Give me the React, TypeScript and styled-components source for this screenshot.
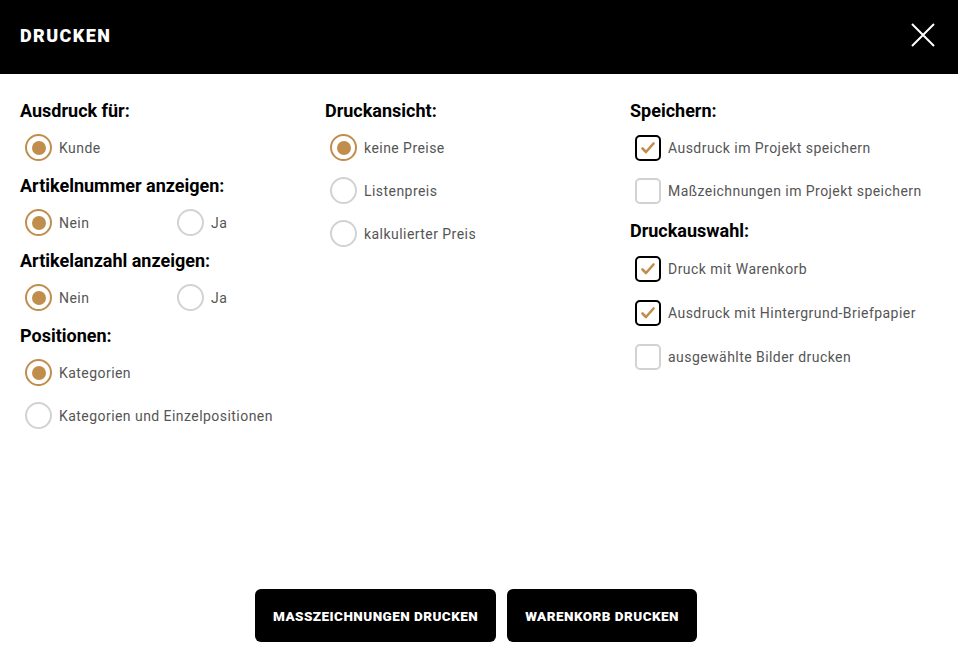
import * as React from "react";
import styled, { createGlobalStyle } from "styled-components";

const ACCENT = "#c18d4c";

const GlobalStyle = createGlobalStyle`
  html, body {
    margin: 0;
    padding: 0;
    background: #fff;
  }
  body {
    font-family: Roboto, "Liberation Sans", sans-serif;
    color: #000;
  }
`;

const Dialog = styled.div`
  width: 958px;
  height: 667px;
  display: flex;
  flex-direction: column;
  background: #fff;
`;

const Header = styled.div`
  height: 74px;
  background: #000;
  display: flex;
  align-items: center;
  justify-content: space-between;
  padding: 0 23px 4px 20px;
  box-sizing: border-box;
  flex-shrink: 0;
`;

const Title = styled.h1`
  margin: 0;
  color: #fff;
  font-size: 18px;
  font-weight: 900;
  letter-spacing: 1.4px;
`;

const CloseButton = styled.button`
  width: 24px;
  height: 24px;
  padding: 0;
  border: 0;
  background: none;
  cursor: pointer;
  display: flex;
`;

const Body = styled.div`
  flex: 1;
  display: grid;
  grid-template-columns: 305px 305px 1fr;
  padding: 26px 20px 0;
  align-content: start;
`;

const Column = styled.div`
  display: flex;
  flex-direction: column;
`;

const GroupTitle = styled.h2`
  margin: 0;
  height: 22px;
  line-height: 22px;
  font-size: 18px;
  font-weight: 700;
`;

const Options = styled.div<{
  $inline?: boolean;
  $before?: number;
  $after?: number;
  $row?: number;
}>`
  display: flex;
  flex-direction: ${(p) => (p.$inline ? "row" : "column")};
  padding: ${(p) => p.$before ?? 4}px 0 ${(p) => p.$after ?? 6}px 5px;
  & > label {
    height: ${(p) => p.$row ?? 43}px;
  }
`;

const OptionRow = styled.label<{ $width?: number }>`
  display: flex;
  align-items: center;
  gap: 7px;
  ${(p) => (p.$width ? `width: ${p.$width}px;` : "")}
  font-size: 14px;
  color: #555;
  letter-spacing: 0.45px;
  cursor: pointer;
`;

const RadioMark = styled.span<{ $on?: boolean }>`
  width: 27px;
  height: 27px;
  box-sizing: border-box;
  border-radius: 50%;
  border: 2px solid ${(p) => (p.$on ? ACCENT : "#d2d2d2")};
  display: flex;
  align-items: center;
  justify-content: center;
  flex-shrink: 0;
  &::after {
    content: "";
    width: 14px;
    height: 14px;
    border-radius: 50%;
    background: ${(p) => (p.$on ? ACCENT : "transparent")};
  }
`;

const CheckMark = styled.span<{ $on?: boolean }>`
  width: 26px;
  height: 26px;
  box-sizing: border-box;
  border-radius: 5px;
  border: 2px solid ${(p) => (p.$on ? "#000" : "#d2d2d2")};
  display: flex;
  align-items: center;
  justify-content: center;
  flex-shrink: 0;
`;

const Footer = styled.div`
  display: flex;
  justify-content: center;
  gap: 11px;
  padding: 0 6px 25px 0;
`;

const ActionButton = styled.button`
  height: 53px;
  padding: 0 18px;
  border: 0;
  border-radius: 6px;
  background: #000;
  color: #fff;
  font-family: Roboto, "Liberation Sans", sans-serif;
  font-size: 13.5px;
  font-weight: 900;
  letter-spacing: 0.45px;
  cursor: pointer;
`;

const Radio: React.FC<{ label: string; on?: boolean; width?: number }> = ({
  label,
  on,
  width,
}) => (
  <OptionRow $width={width}>
    <RadioMark $on={on} />
    {label}
  </OptionRow>
);

const Check: React.FC<{ label: string; on?: boolean }> = ({ label, on }) => (
  <OptionRow>
    <CheckMark $on={on}>
      {on && (
        <svg width="16" height="16" viewBox="0 0 16 16">
          <path
            d="M2.5 8.5 L6 12 L13.5 3.5"
            fill="none"
            stroke={ACCENT}
            strokeWidth="2.6"
            strokeLinecap="round"
            strokeLinejoin="round"
          />
        </svg>
      )}
    </CheckMark>
    {label}
  </OptionRow>
);

export default function App() {
  return (
    <Dialog>
      <GlobalStyle />
      <Header>
        <Title>DRUCKEN</Title>
        <CloseButton aria-label="Schließen">
          <svg width="24" height="24" viewBox="0 0 24 24">
            <path
              d="M1 1 L23 23 M23 1 L1 23"
              stroke="#fff"
              strokeWidth="2"
              fill="none"
            />
          </svg>
        </CloseButton>
      </Header>
      <Body>
        <Column>
          <GroupTitle>Ausdruck für:</GroupTitle>
          <Options>
            <Radio label="Kunde" on />
          </Options>
          <GroupTitle>Artikelnummer anzeigen:</GroupTitle>
          <Options $inline>
            <Radio label="Nein" on width={152} />
            <Radio label="Ja" />
          </Options>
          <GroupTitle>Artikelanzahl anzeigen:</GroupTitle>
          <Options $inline>
            <Radio label="Nein" on width={152} />
            <Radio label="Ja" />
          </Options>
          <GroupTitle>Positionen:</GroupTitle>
          <Options>
            <Radio label="Kategorien" on />
            <Radio label="Kategorien und Einzelpositionen" />
          </Options>
        </Column>
        <Column>
          <GroupTitle>Druckansicht:</GroupTitle>
          <Options>
            <Radio label="keine Preise" on />
            <Radio label="Listenpreis" />
            <Radio label="kalkulierter Preis" />
          </Options>
        </Column>
        <Column>
          <GroupTitle>Speichern:</GroupTitle>
          <Options $after={8}>
            <Check label="Ausdruck im Projekt speichern" on />
            <Check label="Maßzeichnungen im Projekt speichern" />
          </Options>
          <GroupTitle>Druckauswahl:</GroupTitle>
          <Options $row={44} $before={5}>
            <Check label="Druck mit Warenkorb" on />
            <Check label="Ausdruck mit Hintergrund-Briefpapier" on />
            <Check label="ausgewählte Bilder drucken" />
          </Options>
        </Column>
      </Body>
      <Footer>
        <ActionButton>MASSZEICHNUNGEN DRUCKEN</ActionButton>
        <ActionButton>WARENKORB DRUCKEN</ActionButton>
      </Footer>
    </Dialog>
  );
}
